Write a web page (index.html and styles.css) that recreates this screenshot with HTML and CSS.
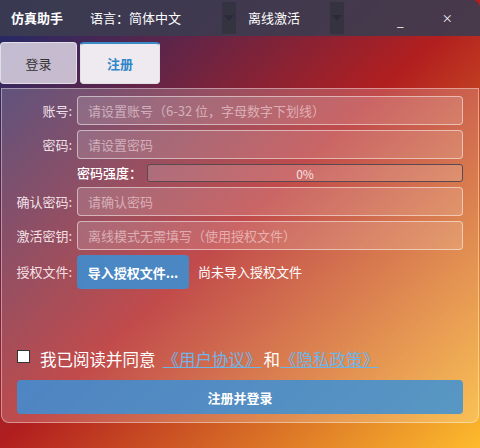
FILE: index.html
```html
<!DOCTYPE html>
<html lang="zh-CN">
<head>
<meta charset="utf-8">
<title>仿真助手</title>
<link rel="stylesheet" href="styles.css">
</head>
<body>
<div class="app">
  <header class="titlebar">
    <span class="app-title">仿真助手</span>
    <div class="combo combo-lang">
      <span class="combo-text">语言：简体中文</span>
      <span class="combo-arrow"></span>
    </div>
    <div class="combo combo-mode">
      <span class="combo-text">离线激活</span>
      <span class="combo-arrow"></span>
    </div>
    <span class="win-btn win-min">_</span>
    <span class="win-btn win-close">×</span>
  </header>

  <nav class="tabs">
    <button class="tab">登录</button>
    <button class="tab tab-active">注册</button>
  </nav>

  <section class="panel">
    <div class="form">
      <label class="label">账号:</label>
      <input class="field" type="text" placeholder="请设置账号（6-32 位，字母数字下划线）">

      <label class="label">密码:</label>
      <input class="field" type="password" placeholder="请设置密码">

      <span></span>
      <div class="strength">
        <span class="strength-label">密码强度：</span>
        <div class="strength-bar"><span>0%</span></div>
      </div>

      <label class="label">确认密码:</label>
      <input class="field" type="password" placeholder="请确认密码">

      <label class="label">激活密钥:</label>
      <input class="field" type="text" placeholder="离线模式无需填写（使用授权文件）">

      <label class="label">授权文件:</label>
      <div class="file-row">
        <button class="btn-import">导入授权文件...</button>
        <span class="file-status">尚未导入授权文件</span>
      </div>
    </div>

    <div class="agree">
      <span class="checkbox"></span>
      <span class="agree-text">我已阅读并同意<a class="link link-first">《用户协议》</a>和<a class="link link-second">《隐私政策》</a></span>
    </div>
    <button class="btn-submit">注册并登录</button>
  </section>
</div>
</body>
</html>
```

FILE: styles.css
```css
* { box-sizing: border-box; }

html, body {
  margin: 0;
  padding: 0;
}

body {
  width: 480px;
  height: 448px;
  overflow: hidden;
  font-family: "Noto Sans CJK SC", "Noto Sans", sans-serif;
  font-size: 13px;
  color: #fff;
}

.app {
  width: 480px;
  height: 448px;
  display: flex;
  flex-direction: column;
  padding-bottom: 25px;
  background: linear-gradient(to bottom right, #1a2a6c 0%, #b21f1f 50%, #fdbb2d 100%);
}

/* title bar */
.titlebar {
  height: 36px;
  flex: none;
  display: flex;
  align-items: center;
  background: rgba(60, 60, 80, 0.9);
  border-top-right-radius: 8px;
  padding-left: 11px;
}

.app-title {
  font-weight: bold;
  font-size: 13px;
  line-height: 16px;
  width: 79px;
}

.combo {
  display: flex;
  align-items: center;
  height: 32px;
}

.combo-lang { width: 146px; }
.combo-mode { width: 96px; margin-left: 12px; }

.combo-text {
  flex: 1;
  line-height: 16px;
  white-space: nowrap;
}

.combo-arrow {
  width: 14px;
  height: 32px;
  background: rgba(50, 50, 62, 0.85);
  display: flex;
  align-items: center;
  justify-content: center;
}

.combo-arrow::after {
  content: "";
  border-left: 5px solid transparent;
  border-right: 5px solid transparent;
  border-top: 6px solid #2a2a3c;
}

.win-btn {
  font-size: 12px;
  line-height: 12px;
}

.win-min {
  margin-left: 53px;
  margin-top: 6px;
}

.win-close {
  margin-left: 38px;
  font-size: 11px;
  margin-top: -1px;
}

/* tabs */
.tabs {
  flex: none;
  display: flex;
  gap: 3px;
  margin-top: 6px;
  height: 42px;
}

.tab {
  font-family: inherit;
  font-size: 13px;
  border-radius: 4px;
  height: 42px;
  padding: 0;
  cursor: pointer;
}

.tab:first-child {
  width: 77px;
  background: rgba(222, 214, 228, 0.85);
  border: 1px solid rgba(255, 255, 255, 0.5);
  color: #333;
}

.tab-active {
  width: 80px;
  background: #eeeaef;
  border: 1px solid #e4e0e6;
  border-top: 2px solid #3a8ac8;
  color: #2f86c8;
  font-weight: bold;
}

/* panel */
.panel {
  flex: 1;
  margin: 4px 1px 0 1px;
  border: 1px solid rgba(255, 255, 255, 0.4);
  border-radius: 0 0 8px 8px;
  background: rgba(255, 255, 255, 0.2);
  padding: 7px 15px 8px 8px;
  display: flex;
  flex-direction: column;
}

.form {
  display: grid;
  grid-template-columns: 62px 1fr;
  column-gap: 5px;
  row-gap: 5px;
  align-items: center;
}

.label {
  justify-self: end;
  white-space: nowrap;
  color: rgba(255, 240, 245, 0.92);
  line-height: 16px;
}

.field {
  height: 29px;
  width: 100%;
  font-family: inherit;
  font-size: 13px;
  color: #fff;
  background: rgba(255, 255, 255, 0.15);
  border: 1px solid rgba(255, 255, 255, 0.5);
  border-radius: 4px;
  padding: 0 10px;
  outline: none;
}

.field::placeholder {
  color: rgba(255, 235, 240, 0.55);
}

.strength {
  display: flex;
  align-items: center;
  height: 18px;
}

.strength-label {
  width: 70px;
  flex: none;
  font-weight: 500;
  line-height: 16px;
}

.strength-bar {
  flex: 1;
  height: 18px;
  border: 1px solid #5a4a50;
  border-radius: 3px;
  background: rgba(255, 255, 255, 0.18);
  display: flex;
  align-items: center;
  justify-content: center;
  font-size: 12px;
  color: rgba(255, 240, 240, 0.9);
}

.file-row {
  display: flex;
  align-items: center;
  height: 34px;
}

.btn-import {
  height: 34px;
  width: 112px;
  font-family: inherit;
  font-size: 13px;
  font-weight: bold;
  color: #fff;
  background: rgba(65, 140, 205, 0.92);
  border: none;
  border-radius: 4px;
  padding: 0;
}

.file-status {
  margin-left: 9px;
  line-height: 16px;
}

/* agreement */
.agree {
  margin-top: auto;
  margin-left: 7px;
  display: flex;
  align-items: center;
  height: 20px;
  margin-bottom: 11px;
}

.checkbox {
  width: 13px;
  height: 13px;
  background: #fff;
  border: 1px solid #333;
  flex: none;
  margin-right: 10px;
  margin-top: -5px;
}

.agree-text {
  font-size: 16.5px;
  line-height: 20px;
  white-space: nowrap;
}

.link {
  color: #6fb4e6;
  text-decoration: underline;
}

.link-first {
  padding: 0 2px 0 7px;
}

.link-second {
  padding: 0 6px 0 0;
}

.btn-submit {
  margin-left: 7px;
  height: 34px;
  font-family: inherit;
  font-size: 13px;
  font-weight: bold;
  color: #fff;
  background: rgba(60, 145, 215, 0.85);
  border: none;
  border-radius: 4px;
}
```
